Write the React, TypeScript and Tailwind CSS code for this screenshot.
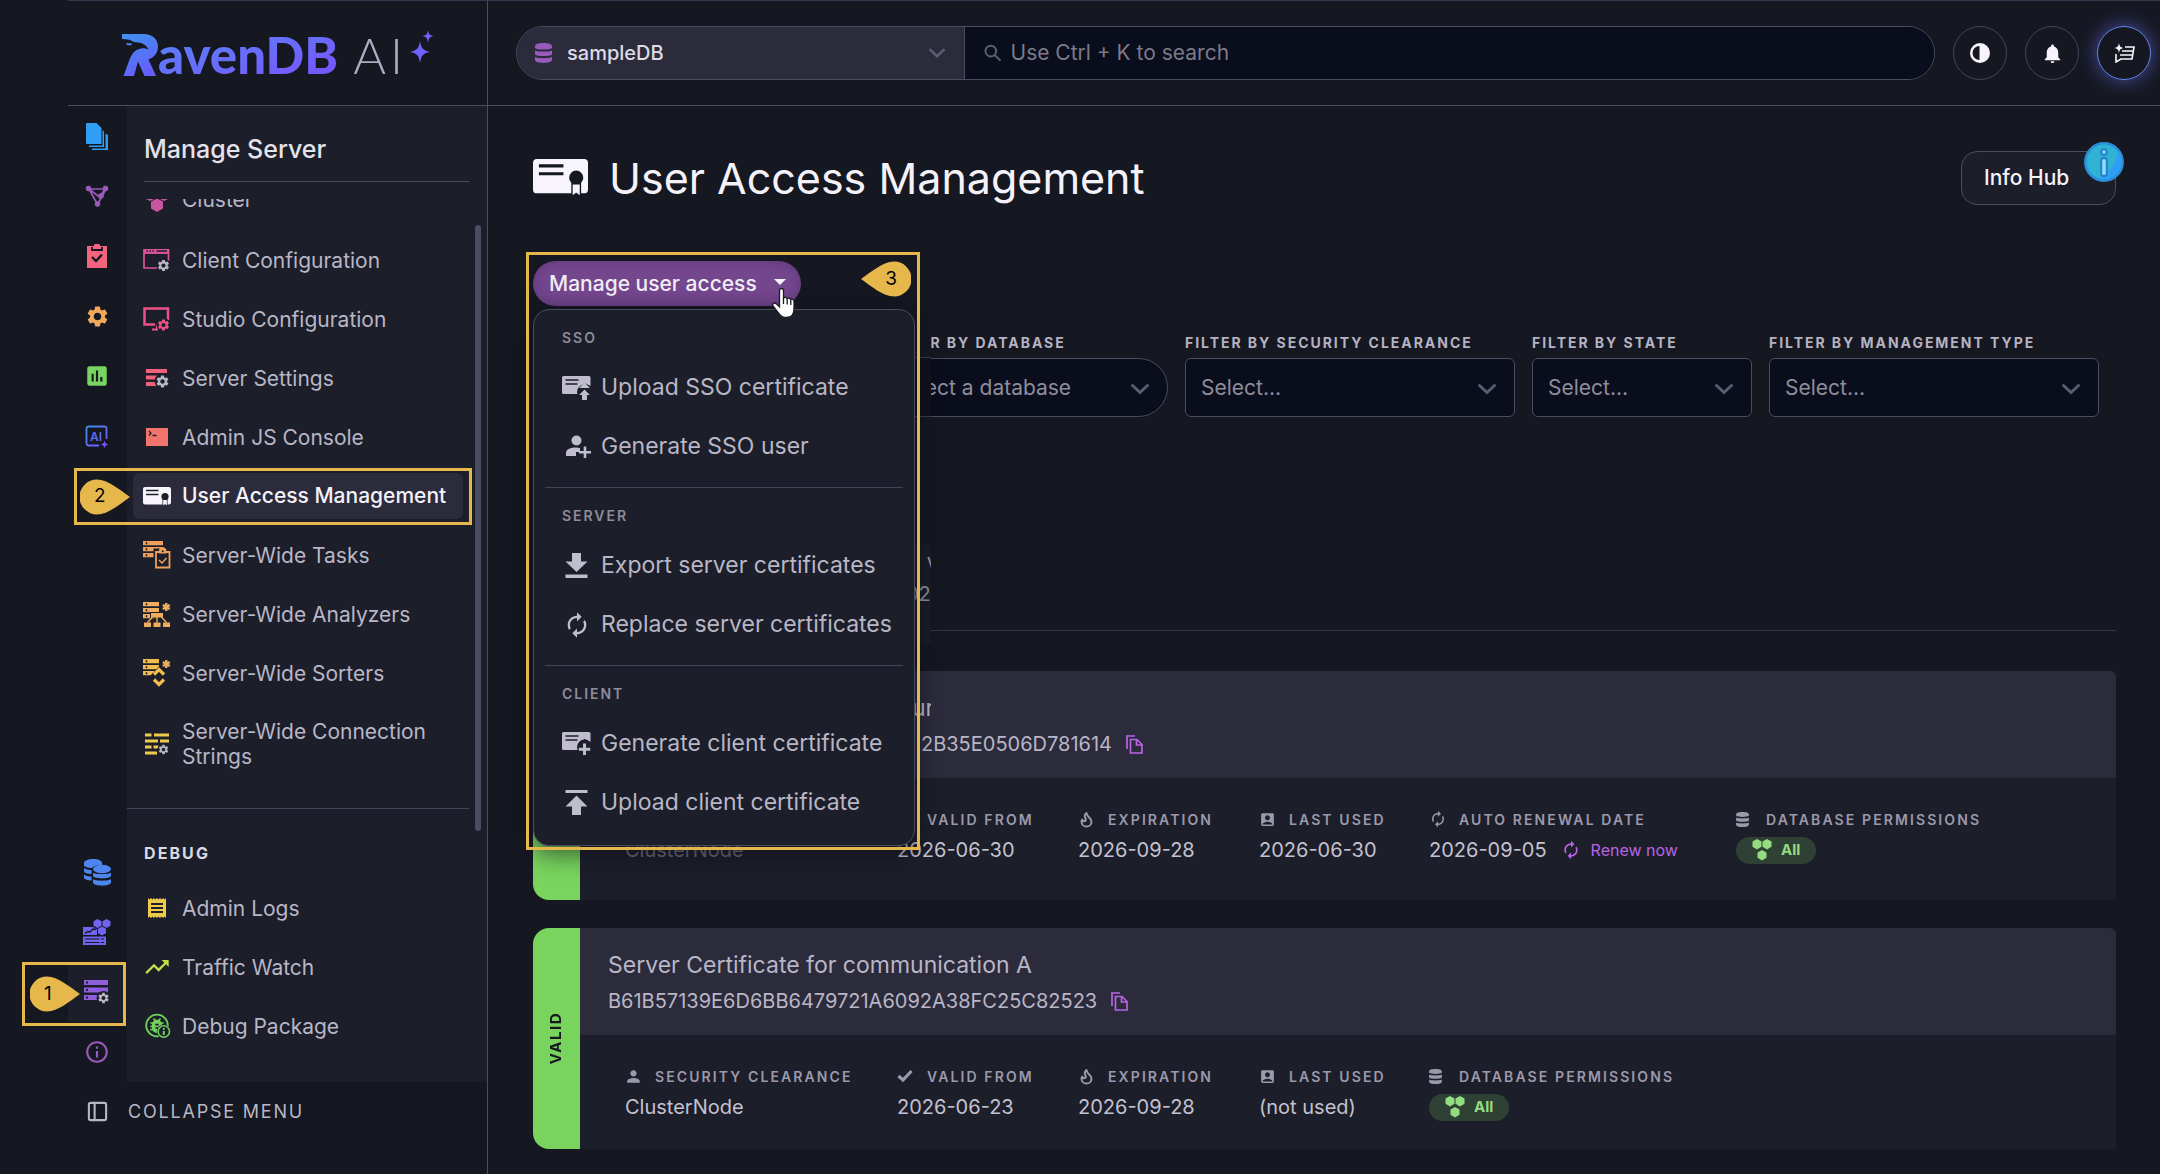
import type { ReactNode } from "react";
import { Flame, PanelLeft } from "lucide-react";
import {
  MdAccountBox,
  MdAutorenew,
  MdBugReport,
  MdInfoOutline,
  MdNotifications,
  MdPerson,
  MdPoll,
  MdReceipt,
  MdSettings,
  MdTrendingUp,
} from "react-icons/md";

const PANEL = "#1c1e2a";
const PAGE = "#151721";

/* ---------- icons ---------- */

const DocsIcon = () => (
  <svg width="22" height="27" viewBox="0 0 22 27" fill="#2f9ef4">
    <path d="M0 1a1 1 0 0 1 1-1h9.500l5 5v15a1 1 0 0 1-1 1H1a1 1 0 0 1-1-1z" />
    <path d="M16.500 7l1.500 1.500V24H3v-1.500h13.500zM19.500 10.500L22 12v15H6v-1.500h13.500z" />
  </svg>
);

const GraphIcon = () => (
  <svg width="24" height="24" viewBox="0 0 24 24" fill="#9a5abc" stroke="#9a5abc">
    <path d="M4 5h17l-8.500 15.500zM4 5l10.500 8L20 5" fill="none" strokeWidth="1.700" />
    <circle cx="3.500" cy="4.500" r="2.400" />
    <circle cx="20.500" cy="4.500" r="2.400" />
    <circle cx="12.500" cy="20" r="2.400" />
    <circle cx="16" cy="12" r="2.400" />
  </svg>
);

const ClipboardIcon = () => (
  <svg width="20" height="24" viewBox="0 0 20 24">
    <path d="M0 2h7a3 3 0 0 1 6 0h7v22H0z" fill="#f4647f" />
    <path d="M5 3v3h10V3" fill="none" stroke={PAGE} strokeWidth="1.800" />
    <path d="M5 13l4 4 6-6.500" fill="none" stroke={PAGE} strokeWidth="2.400" />
  </svg>
);

const AiIcon = () => (
  <svg width="24" height="24" viewBox="0 0 24 24">
    <defs>
      <linearGradient id="aiBox" x1="0" y1="0" x2="1" y2="1">
        <stop offset="0" stopColor="#3f8ff2" />
        <stop offset="1" stopColor="#7a52ff" />
      </linearGradient>
    </defs>
    <path d="M14 21.500H3.500a2 2 0 0 1-2-2v-15a2 2 0 0 1 2-2h16a2 2 0 0 1 2 2V15" fill="none" stroke="url(#aiBox)" strokeWidth="1.800" />
    <text x="5" y="16.500" fontSize="12" fontWeight="600" fontFamily="Inter, sans-serif" fill="#5b6cf5">AI</text>
    <path d="M19.500 16.500c.6 2.700 1.300 3.400 4 4-2.700.6-3.400 1.300-4 4-.6-2.700-1.300-3.400-4-4 2.700-.6 3.400-1.300 4-4z" fill="#7a52ff" />
  </svg>
);

const DatabasesIcon = () => (
  <svg width="27" height="27" viewBox="0 0 27 27" fill="#4c86ee">
    <path d="M0 4c0-2.200 4-4 9-4s9 1.500 9 4v2c-5-.5-9 1-10 3-4 0-8-1-8-3z" />
    <path d="M0 9c1.500 1.500 5 2 7.500 2v4C4 15 0 14 0 12.500zM0 15.500C1.500 17 5 17.500 7.500 17.500v4C4 21.500 0 20.500 0 18.500z" />
    <ellipse cx="18" cy="10" rx="9" ry="4.300" />
    <path d="M9 13.500c2 2.200 16 2.200 18 0V17c-1 3.200-17 3.200-18 0zM9 20c2 2.200 16 2.200 18 0v3.500c-1 4.200-17 4.200-18 0z" />
  </svg>
);

const ClusterBoardIcon = () => (
  <svg width="28" height="26" viewBox="0 0 28 26" fill="#7164f0">
    <path d="M14.500 0l4 2.200v4.600l-4 2.200-4-2.200V2.200zM23.500 0l4 2.200v4.600l-4 2.200-4-2.200V2.200zM19 7.500l4 2.200v4.600l-4 2.200-4-2.200V9.700z" />
    <path d="M0 8h10l4 2v6H0z" />
    <path d="M2 14.500l3-2 2 .5 3-3 2 .500 1-1" fill="none" stroke={PAGE} strokeWidth="1.300" />
    <path d="M0 17.500h23V26H0z" />
    <path d="M2 20h14.500M18 20h3M2 23.500h14.500M18 23.500h3" stroke={PAGE} strokeWidth="1.200" />
  </svg>
);

const ServerGearIcon = () => (
  <svg width="26" height="24" viewBox="0 0 26 24" fill="#8d5fdc">
    <path d="M0 0h24v5H0zM0 7.500h24v5H0zM0 15h13v5H0z" />
    <path d="M2 1.500h2v2H2zM2 9h2v2H2zM2 16.500h2v2H2z" fill={PANEL} />
    <circle cx="19.500" cy="18" r="7" fill={PANEL} />
    <MdSettings x="13" y="11.500" size={13} />
  </svg>
);

const ClientConfigIcon = () => (
  <svg width="28" height="25" viewBox="0 0 28 25" fill="#d9539a">
    <path d="M1 1h24.500v4H1z" />
    <path d="M1 1v19h16M25.500 1v12" fill="none" stroke="#d9539a" strokeWidth="1.700" />
    <path d="M1 5.200h24.500" stroke="#d9539a" strokeWidth="1.500" />
    <path d="M3.500 3h1.500M6.500 3H8M9.500 3H11M13.500 3H24" stroke={PANEL} strokeWidth="1.400" />
    <circle cx="20.500" cy="17.500" r="7" fill={PANEL} />
    <MdSettings x="13.500" y="10.500" size={14} />
  </svg>
);

const StudioConfigIcon = () => (
  <svg width="28" height="25" viewBox="0 0 28 25" fill="#e9517f">
    <path d="M12 17.500H1.500V1.500h23.500V13" fill="none" stroke="#ec5288" strokeWidth="2.500" />
    <path d="M9 22.500h5v-5" fill="none" stroke="#ec5288" strokeWidth="2.200" />
    <circle cx="20.500" cy="18" r="7" fill={PANEL} />
    <MdSettings x="13.500" y="11" size={14} color="#ec5288" />
  </svg>
);

const ServerSettingsIcon = () => (
  <svg width="28" height="22" viewBox="0 0 28 22" fill="#f3607a">
    <path d="M3 2h21v4H3zM3 8.500h12v4H3zM3 15h11v4H3z" />
    <circle cx="19" cy="14" r="7.500" fill={PANEL} />
    <MdSettings x="12" y="7" size={15} />
  </svg>
);

const ConsoleIcon = () => (
  <svg width="28" height="20" viewBox="0 0 28 20">
    <path d="M3 1h22v18H3z" fill="#f3746c" />
    <path d="M6 4l2 2.200L6 8.500M9.500 8.500h4" fill="none" stroke={PANEL} strokeWidth="1.300" />
  </svg>
);

const CertIcon = ({ size, hole }: { size: number; hole: string }) => (
  <svg width={size} height={(size * 19) / 28} viewBox="0 0 28 19">
    <rect width="28" height="17.500" rx="2" fill="#f7f5fb" />
    <path d="M3 3.500h12.500M3 7.500h12.500" stroke={hole} strokeWidth="1.600" />
    <circle cx="22" cy="9.500" r="3.600" fill={hole} />
    <path d="M19.500 12h5v7l-2.500-1.500-2.500 1.500z" fill={hole} />
    <path d="M20.200 13h3.600v5.500L22 17l-1.800 1.500z" fill="#f7f5fb" />
  </svg>
);

const Rack = ({ w }: { w: number }) => (
  <>
    <path d={`M0 0h${w}v4.200H0zM0 6h${w}v4.200H0zM0 12h${w - 4}v4.200H0z`} />
    <path d="M3.500 1.200v2M3.500 7.200v2M3.500 13.200v2" stroke={PANEL} strokeWidth="1.500" />
  </>
);

const Asterisk = () => (
  <path d="M23.300 1v8M19.800 3l7 4M26.800 3l-7 4" stroke="#f0ae5c" strokeWidth="2.400" />
);

const WideTasksIcon = () => (
  <svg width="28" height="28" viewBox="0 0 28 28" fill="#eea05a">
    <Rack w={20} />
    <path d="M10.500 7.500h20v22h-20z" fill={PANEL} />
    <path d="M13 11h13.500v15.500H13z" fill="none" stroke="#eea05a" strokeWidth="1.800" />
    <path d="M16 12.500V10a3.700 3.700 0 0 1 7.400 0v2.500z" />
    <circle cx="19.700" cy="10.300" r="1" fill={PANEL} />
    <path d="M16 19l3 3 4.500-5" fill="none" stroke="#eea05a" strokeWidth="1.500" />
  </svg>
);

const WideAnalyzersIcon = () => (
  <svg width="28" height="25" viewBox="0 0 28 25" fill="#f0ae5c">
    <Rack w={16} />
    <path d="M7 10h14v6H7z" fill={PANEL} />
    <path d="M8 11h12v4.500H8zM1 20.500h7V25H1zM10.500 20.500h7V25h-7zM20 20.500h7V25h-7z" />
    <path d="M9.500 15l-5 5.500M14 15v5.500M18.500 15l5 5.500" stroke="#f0ae5c" strokeWidth="1.400" />
    <Asterisk />
  </svg>
);

const WideSortersIcon = () => (
  <svg width="28" height="28" viewBox="0 0 28 28" fill="#f3bd4e">
    <Rack w={16} />
    <path d="M7 17l9-9.500 9 9.500-9 11z" fill={PANEL} />
    <path d="M11 15.500l5-5 5 5M11 20.500l5 5 5-5" fill="none" stroke="#f3bd4e" strokeWidth="3.200" />
    <Asterisk />
  </svg>
);

const ConnectionStringsIcon = () => (
  <svg width="28" height="24" viewBox="0 0 28 24" fill="#eecb4b">
    <path d="M2 1.500h6.500v3H2zM11 1.500h15v3H11zM2 7.500h13v3H2zM17 7.500h9v3h-9zM2 13.500h6.500v3H2zM10.500 13.500h5v3h-5zM2 19.500h12v3H2z" />
    <circle cx="20.500" cy="17.500" r="6" fill={PANEL} />
    <MdSettings x="14.500" y="11.500" size={12} />
  </svg>
);

const DebugPackageIcon = () => (
  <svg width="28" height="26" viewBox="0 0 28 26">
    <circle cx="14" cy="12.500" r="10.800" fill="none" stroke="#6fd25a" strokeWidth="1.800" />
    <MdBugReport x="4" y="2.500" size={20} color="#6fd25a" />
    <circle cx="20.800" cy="18.500" r="7" fill={PANEL} />
    <circle cx="20.800" cy="18.500" r="5.700" fill="none" stroke="#6fd25a" strokeWidth="1.600" />
    <path d="M20.800 15v1.700M20.800 18v4" stroke="#6fd25a" strokeWidth="2" />
  </svg>
);

const DbStackIcon = ({ w, h, color }: { w: number; h: number; color: string }) => (
  <svg width={w} height={h} viewBox="0 0 17 20" fill={color} className="shrink-0">
    <path d="M0 3.200C0 1 3.500 0 8.500 0S17 1 17 3.200V5c-2 2-15 2-17 0zM0 7.400c3 1.600 14 1.600 17 0v4.200c-2 2-15 2-17 0zM0 14c3 1.600 14 1.600 17 0v2.600C17 19 13.500 20 8.500 20S0 19 0 16.600z" />
  </svg>
);

const Chevron = ({ size = 20 }: { size?: number }) => (
  <svg width={size} height="12" viewBox="0 0 20 12" fill="none" stroke="#5a5c72" strokeWidth="3" strokeLinecap="round" className="pointer-events-none">
    <path d="M2.500 2.500l7.500 7 7.500-7" />
  </svg>
);

const CertBase = ({ children }: { children: ReactNode }) => (
  <svg width="29" height="25" viewBox="0 0 29 25" fill="#c0bdcd">
    <path d="M1.500 1h25.500a1.500 1.500 0 0 1 1.500 1.500V11l-6-3-6.500 6v5H1.500A1.500 1.500 0 0 1 0 17.500v-15A1.500 1.500 0 0 1 1.500 1z" />
    <path d="M3.500 5h13M3.500 9h12" stroke={PANEL} strokeWidth="1.500" />
    {children}
  </svg>
);

const CertUploadIcon = () => (
  <CertBase>
    <circle cx="22.500" cy="17" r="7.500" fill={PANEL} />
    <path d="M17 13l5.500-5.500 5.500 5.500zM17 20l5.500-5.500 5.500 5.500h-3v5h-5v-5z" />
  </CertBase>
);

const CertPlusIcon = () => (
  <CertBase>
    <circle cx="22.500" cy="16" r="7.500" fill={PANEL} />
    <path d="M22.500 12.500v11.500M16.800 18.200h11.400" stroke="#c0bdcd" strokeWidth="3" />
  </CertBase>
);

const UserPlusIcon = () => (
  <svg width="29" height="23" viewBox="0 0 29 23" fill="#c0bdcd">
    <circle cx="14.500" cy="5.500" r="5" />
    <path d="M4 21v-3c0-4 5-5.500 10-5.500 1.500 0 3 .2 4 .5v4h-4v4z" />
    <path d="M23 11.500v11.500M17 17.200h12" stroke="#c0bdcd" strokeWidth="2.600" />
  </svg>
);

const DownloadIcon = () => (
  <svg width="29" height="25" viewBox="0 0 29 25" fill="#c0bdcd">
    <path d="M10 0h9v8.500h6.500L14.500 19 3.500 8.500H10zM3.500 21.500h22V25h-22z" />
  </svg>
);

const UploadIcon = () => (
  <svg width="29" height="25" viewBox="0 0 29 25" fill="#c0bdcd">
    <path d="M10 25h9v-8.500h6.500L14.500 5.500 3.500 16.500H10zM3.500 0h22v3h-22z" />
  </svg>
);

const ReplaceIcon = () => (
  <span className="flex w-[29px] justify-center">
    <MdAutorenew size={28} color="#c0bdcd" />
  </span>
);

const CopyIcon = () => (
  <svg width="17" height="19" viewBox="0 0 17 19" fill="none" stroke="#b964e4" strokeWidth="1.700">
    <path d="M1 14V1h8" />
    <path d="M4.500 4.500h6.500l5 5V18H4.500zM10.500 4.500V10H16" />
  </svg>
);

const CheckIcon = () => (
  <svg width="16" height="14" viewBox="0 0 16 14" fill="none" stroke="#9c99ab" strokeWidth="3.200">
    <path d="M1.500 7l4.500 4L14.500 2" />
  </svg>
);

const HexesIcon = () => (
  <svg width="20" height="22" viewBox="0 0 20 22" fill="#93dc80">
    <path d="M5 0l4.500 2.600v5.200L5 10.400.5 7.800V2.600zM15 0l4.500 2.600v5.200L15 10.400l-4.500-2.600V2.600zM10 11l4.500 2.600v5.200L10 21.400l-4.500-2.600v-5.200z" />
  </svg>
);

const Logo = () => (
  <div className="flex items-end" role="img" aria-label="RavenDB AI">
    <svg width="36" height="42" viewBox="0 0 36 42">
      <defs>
        <linearGradient id="raven" x1="0" y1="0" x2="0.400" y2="1">
          <stop offset="0" stopColor="#3f93f0" />
          <stop offset="1" stopColor="#6560fb" />
        </linearGradient>
      </defs>
      <path
        d="M0 0h22c8 0 14 5 14 12.500 0 6-3.500 11-9.500 13L34 42H22.500l-6.500-14.500L12 42H1.500L7 27c2.500-6 4.500-11 12-12.500 3-.5 6 .5 7.500 1C24 10.500 20 9 16 8.500 10 8.500 10 5 0 5z"
        fill="url(#raven)"
      />
      <path d="M4 9l6 .500-1 2-4-.500z" fill="#4a82f2" />
    </svg>
    <span className="-mb-[7px] bg-linear-to-br from-[#4d86f5] to-[#7a4dff] bg-clip-text font-[Lato] text-[51px] leading-[56px] font-black text-transparent">
      avenDB
    </span>
    <span className="-mb-[7px] ml-[15px] flex gap-[4px] font-[Lato] text-[50px] leading-[56px] font-light text-[#b0abc2]">
      <span>A</span>
      <span>I</span>
    </span>
    <svg width="24" height="34" viewBox="0 0 24 34" className="mb-3 ml-[7px]" fill="#7060fb">
      <path d="M10 11c1.300 7.500 2.500 9 10 11-7.500 1.500-8.700 3.500-10 11-1.300-7.500-2.500-9.500-10-11 7.500-2 8.700-3.500 10-11zM18 0c.8 4.500 1.500 5.200 6 6-4.500.8-5.200 2-6 7-.8-5-1.500-6.200-6-7 4.500-.8 5.200-1.500 6-6z" />
    </svg>
  </div>
);

/* ---------- callouts ---------- */

const Callout = ({ n, flip }: { n: number; flip?: boolean }) => (
  <span className="relative flex h-[36px] w-[50px] items-center">
    <svg width="50" height="36" viewBox="0 0 50 36" className={flip ? "absolute rotate-180" : "absolute"}>
      <path d="M50 18C40 11 28 .5 17 .5a17.500 17.500 0 0 0 0 35C28 35.500 40 25 50 18z" fill="#e6b84c" />
    </svg>
    <span className={flip ? "relative w-full pr-[14px] text-right text-[19px] text-black" : "relative w-full pl-[14px] text-[19px] text-black"}>{n}</span>
  </span>
);

/* ---------- sidebar ---------- */

const navItems: { icon: ReactNode; label: string; active?: boolean }[] = [
  { icon: <ClientConfigIcon />, label: "Client Configuration" },
  { icon: <StudioConfigIcon />, label: "Studio Configuration" },
  { icon: <ServerSettingsIcon />, label: "Server Settings" },
  { icon: <ConsoleIcon />, label: "Admin JS Console" },
  { icon: <CertIcon size={28} hole={PANEL} />, label: "User Access Management", active: true },
  { icon: <WideTasksIcon />, label: "Server-Wide Tasks" },
  { icon: <WideAnalyzersIcon />, label: "Server-Wide Analyzers" },
  { icon: <WideSortersIcon />, label: "Server-Wide Sorters" },
];

const debugItems = [
  { icon: <MdReceipt size={24} color="#eecb4b" />, label: "Admin Logs" },
  { icon: <MdTrendingUp size={28} color="#c3dc4a" />, label: "Traffic Watch" },
  { icon: <DebugPackageIcon />, label: "Debug Package" },
];

const NavItem = ({ icon, label, active }: { icon: ReactNode; label: string; active?: boolean }) => (
  <a
    href="#"
    className={
      active
        ? "relative mx-[6px] flex h-[46px] items-center gap-[11px] rounded-md bg-[#2b2b3c] pl-[10px] text-[21px] font-medium text-[#f4f2f8]"
        : "mx-[6px] flex min-h-[46px] items-center gap-[11px] py-[10px] pl-[10px] text-[21px] leading-[25px] text-[#b9b6c6]"
    }
  >
    <span className="flex h-[26px] w-7 shrink-0 items-center justify-center">{icon}</span>
    {label}
    {active && (
      <span className="absolute -top-[5px] -left-[59px] flex h-[57px] w-[398px] items-center border-3 border-[#e6b84c] pl-[3px] font-normal">
        <Callout n={2} />
      </span>
    )}
  </a>
);

const RailButton = ({ label, children }: { label: string; children: ReactNode }) => (
  <button type="button" aria-label={label} className="flex h-[60px] w-full items-center justify-center">
    {children}
  </button>
);

const Sidebar = () => (
  <aside className="flex w-[420px] shrink-0 flex-col border-t border-r border-t-[#2f3b4d] border-r-[#4a4c5f]">
    <div className="flex h-[105px] items-end border-b border-[#4a4c5f] pb-[29px] pl-[54px]">
      <Logo />
    </div>
    <div className="flex flex-1">
      <nav aria-label="Sections" className="flex w-[58px] shrink-0 flex-col justify-between">
        <div>
          <RailButton label="Documents"><DocsIcon /></RailButton>
          <RailButton label="Indexes"><GraphIcon /></RailButton>
          <RailButton label="Tasks"><ClipboardIcon /></RailButton>
          <RailButton label="Settings"><MdSettings size={25} color="#f0a85a" /></RailButton>
          <RailButton label="Stats"><MdPoll size={26} color="#78d55f" /></RailButton>
          <RailButton label="AI Hub"><AiIcon /></RailButton>
        </div>
        <div>
          <RailButton label="Databases"><DatabasesIcon /></RailButton>
          <RailButton label="Cluster Dashboard"><ClusterBoardIcon /></RailButton>
          <div className="relative bg-[#1c1e2a]">
            <RailButton label="Manage Server"><ServerGearIcon /></RailButton>
            <span className="absolute top-0 -left-[46px] flex h-[64px] w-[104px] items-center border-3 border-[#e6b84c] pl-[5px]">
              <Callout n={1} />
            </span>
          </div>
          <RailButton label="About"><MdInfoOutline size={26} color="#9a5abc" /></RailButton>
        </div>
      </nav>
      <div className="ml-px flex flex-1 bg-[#1c1e2a]">
        <div className="flex flex-1 flex-col">
          <h2 className="ml-[17px] h-[76px] border-b border-[#4a4c5f] pt-[25px] text-[25px] leading-9 font-medium text-[#e4e2ea]">
            Manage Server
          </h2>
          <div className="mt-[17px] h-[24px] overflow-hidden">
            <div className="-mt-[22px]">
              <a href="#" className="ml-[6px] flex h-[46px] items-center gap-[11px] pl-[10px] text-[21px] text-[#b9b6c6]">
                <svg width="28" height="28" viewBox="0 0 28 28" fill="#c7559f">
                  <path d="M7 2l6 3v7l-6 3-6-3V5zM21 2l6 3v7l-6 3-6-3V5zM14 12.500l6 3v7L14 26l-6-3.500v-7z" />
                </svg>
                Cluster
              </a>
            </div>
          </div>
          <div className="mt-[14px] flex flex-col gap-[13px]">
            {navItems.map((item) => (
              <NavItem key={item.label} icon={item.icon} label={item.label} active={item.active} />
            ))}
            <NavItem icon={<ConnectionStringsIcon />} label="Server-Wide Connection Strings" />
          </div>
          <div className="mt-[29px] border-t border-[#43455a]" />
          <h3 className="mt-[32px] mb-[20px] ml-[17px] text-[16px] leading-6 font-bold tracking-[0.13em] text-[#dad8e2]">DEBUG</h3>
          <div className="flex flex-col gap-[13px]">
            {debugItems.map((item) => (
              <NavItem key={item.label} icon={item.icon} label={item.label} />
            ))}
          </div>
        </div>
        <div className="w-[18px] shrink-0 pt-[119px] pl-[6px]">
          <div className="h-[606px] w-[6px] rounded-full bg-[#4a4c61]" />
        </div>
      </div>
    </div>
    <button type="button" className="mb-[34px] flex h-[58px] items-center gap-[19px] pl-[18px] text-[18px] tracking-widest text-[#b9b6c6]">
      <PanelLeft size={23} strokeWidth={2.200} />
      COLLAPSE MENU
    </button>
  </aside>
);

/* ---------- header ---------- */

const RoundButton = ({ label, glow, children }: { label: string; glow?: boolean; children: ReactNode }) => (
  <button
    type="button"
    aria-label={label}
    className={
      glow
        ? "flex size-[54px] shrink-0 items-center justify-center rounded-full border border-[#5f8af0] shadow-[0_0_18px_2px_#42468c]"
        : "flex size-[54px] shrink-0 items-center justify-center rounded-full border border-[#43455a]"
    }
  >
    {children}
  </button>
);

const Header = () => (
  <header className="flex h-[106px] items-center gap-[18px] border-t border-b border-t-[#2f3b4d] border-b-[#4a4c5f] pr-[9px] pl-[28px]">
    <div className="flex h-[54px] flex-1 overflow-hidden rounded-full border border-[#4a4c5f]">
      <button type="button" className="flex w-[448px] items-center gap-[15px] border-r border-[#4a4c5f] bg-[#2b2b3c] px-[18px] text-[20px] font-medium text-[#dddbe5]">
        <DbStackIcon w={17} h={20} color="#9a5abc" />
        <span className="flex-1 text-left">sampleDB</span>
        <Chevron size={18} />
      </button>
      <label className="flex flex-1 items-center gap-[9px] bg-[#0a0d1c] pl-[19px]">
        <svg width="18" height="18" viewBox="0 0 18 18" fill="none" stroke="#5c5d70" strokeWidth="2">
          <circle cx="7" cy="7" r="5.500" />
          <path d="M11 11l6 6" />
        </svg>
        <input
          type="search"
          aria-label="Search"
          placeholder="Use Ctrl + K to search"
          className="w-full bg-transparent text-[21px] outline-none placeholder:text-[#7b7a8a]"
        />
      </label>
    </div>
    <RoundButton label="Theme">
      <svg width="20" height="20" viewBox="0 0 20 20">
        <circle cx="10" cy="10" r="10" fill="#f7f5fb" />
        <path d="M9.500 3a7 7 0 0 0 0 14z" fill={PAGE} />
      </svg>
    </RoundButton>
    <RoundButton label="Notifications"><MdNotifications size={23} color="#f7f5fb" /></RoundButton>
    <RoundButton label="AI Assistant" glow>
      <svg width="21" height="20" viewBox="0 0 21 20" fill="none" stroke="#f7f5fb" strokeWidth="1.600">
        <path d="M11 4h9l-2 12H7l-5 3v-8M8 8h11M6 12h12" />
        <path d="M5 0c.6 3.400 1.300 4.200 4.500 5C6.300 5.800 5.600 6.600 5 10 4.400 6.600 3.700 5.800.5 5 3.700 4.200 4.400 3.400 5 0z" fill="#f7f5fb" stroke="none" />
      </svg>
    </RoundButton>
  </header>
);

/* ---------- access menu ---------- */

const menuGroups = [
  {
    title: "SSO",
    items: [
      { icon: <CertUploadIcon />, label: "Upload SSO certificate" },
      { icon: <UserPlusIcon />, label: "Generate SSO user" },
    ],
  },
  {
    title: "SERVER",
    items: [
      { icon: <DownloadIcon />, label: "Export server certificates" },
      { icon: <ReplaceIcon />, label: "Replace server certificates" },
    ],
  },
  {
    title: "CLIENT",
    items: [
      { icon: <CertPlusIcon />, label: "Generate client certificate" },
      { icon: <UploadIcon />, label: "Upload client certificate" },
    ],
  },
];

const AccessMenu = () => (
  <div className="absolute top-[48px] left-0 z-20 w-[382px] rounded-2xl border border-[#4a4c5f] bg-[#1c1e2a] px-[11px] pb-[2px] shadow-[0_8px_24px_rgba(10,12,20,0.6)]">
    {menuGroups.map((group) => (
      <div key={group.title} className="border-b border-[#43455a] pt-[16px] pb-[11px] last:border-b-0">
        <div className="mb-[8px] pl-[17px] text-[14px] leading-6 font-semibold tracking-[0.14em] text-[#8f8c9e]">{group.title}</div>
        {group.items.map((item) => (
          <button key={item.label} type="button" className="flex h-[59px] w-full items-center gap-[10px] pl-[17px] text-[23px] whitespace-nowrap text-[#b9b6c6]">
            <span className="shrink-0">{item.icon}</span>
            {item.label}
          </button>
        ))}
      </div>
    ))}
  </div>
);

const Cursor = () => (
  <svg width="26" height="32" viewBox="0 0 26 32" className="absolute top-[26px] left-[238px] z-40">
    <path
      d="M8.500 3.500a2 2 0 0 1 4 0V11c1-1 3-.8 3.600.6 1-.8 3-.5 3.500.9 1.200-.7 3.400-.2 3.400 2V22c0 5-2.500 8.500-7.500 8.500-4 0-6-1.500-7.500-4L2 19c-1.200-2.200 1.500-4 3.300-2.200l3.200 3z"
      fill="#fff"
      stroke="#1b1b22"
      strokeWidth="1.300"
    />
    <path d="M12.500 11v6M16.200 12v5.500M19.800 13v5" stroke="#1b1b22" strokeWidth="1.300" />
  </svg>
);

/* ---------- filters ---------- */

const Filter = ({ id, label, text, width, pill }: { id: string; label: string; text: string; width: string; pill?: boolean }) => (
  <div className={`relative ${width}`}>
    <label htmlFor={id} className="mb-[5px] block text-[14px] leading-5 font-bold tracking-[0.14em] whitespace-nowrap text-[#b5b2c2] uppercase">
      {label}
    </label>
    <div className="relative">
      <select
        id={id}
        className={
          pill
            ? "h-[59px] w-full appearance-none rounded-full border border-[#4a4c5f] bg-[#0a0d1c] px-[9px] text-[21px] text-[#8f8d9c]"
            : "h-[59px] w-full appearance-none rounded-md border border-[#4a4c5f] bg-[#0a0d1c] px-[15px] text-[21px] text-[#8f8d9c]"
        }
      >
        <option>{text}</option>
      </select>
      <span className="pointer-events-none absolute top-[25px] right-[18px]">
        <Chevron />
      </span>
    </div>
  </div>
);

/* ---------- certificates ---------- */

const Field = ({ icon, label, children }: { icon: ReactNode; label: string; children: ReactNode }) => (
  <div>
    <dt className="flex h-6 items-center text-[14px] font-semibold tracking-[0.15em] whitespace-nowrap text-[#9c99ab]">
      <span className="flex w-[30px] shrink-0">{icon}</span>
      {label}
    </dt>
    <dd className="mt-1 flex h-[30px] items-center text-[20px] whitespace-nowrap text-[#c4c1d0]">{children}</dd>
  </div>
);

const AllPill = () => (
  <span className="flex h-[27px] items-center gap-[9px] rounded-full bg-[#2f4034] px-4 text-[15px] font-bold text-[#93dc80]">
    <HexesIcon />
    All
  </span>
);

const fieldIcons = {
  person: <MdPerson size={19} className="-ml-px" />,
  flame: <Flame size={17} strokeWidth={2.800} />,
  lastUsed: <MdAccountBox size={17} />,
  renew: <MdAutorenew size={18} />,
  db: <DbStackIcon w={13} h={15} color="#9c99ab" />,
};

const StateStrip = () => (
  <div className="flex w-[47px] shrink-0 items-center justify-center rounded-l-2xl bg-[#79d45e]">
    <span className="rotate-180 text-[15px] font-bold tracking-[0.1em] text-[#151721] [writing-mode:vertical-rl]">VALID</span>
  </div>
);

const Certificate = ({ title, hash, children, bodyClass }: { title: ReactNode; hash: ReactNode; children: ReactNode; bodyClass: string }) => (
  <article className="flex">
    <StateStrip />
    <div className="flex-1 overflow-hidden rounded-tr-md bg-[#1c1e2a]">
      <div className="h-[107px] bg-[#2b2b3c] pt-[21px] pl-[28px]">
        <h3 className="text-[23px] leading-8 text-[#b9b6c6]">{title}</h3>
        <div className="mt-[5px] flex h-[30px] items-center gap-[14px] text-[20px] text-[#b9b6c6]">
          {hash}
          <button type="button" aria-label="Copy thumbprint"><CopyIcon /></button>
        </div>
      </div>
      <dl className={bodyClass}>{children}</dl>
    </div>
  </article>
);

/* ---------- page ---------- */

export default function App() {
  return (
    <div className="flex min-h-screen bg-[#151721] pl-[68px] font-[Inter,sans-serif] text-[#b9b6c6]">
      <Sidebar />
      <div className="flex min-w-0 flex-1 flex-col">
        <Header />
        <main className="pt-[45px] pr-[44px] pl-[45px]">
          <div className="flex h-[54px] items-center justify-between">
            <h1 className="flex items-center gap-[21px] text-[43px] text-[#f4f2f8]">
              <CertIcon size={55} hole={PAGE} />
              User Access Management
            </h1>
            <button type="button" className="relative h-full w-[155px] rounded-2xl border border-[#4a4c5f] bg-[#1c1e2a] pl-[22px] text-left text-[21px] font-medium text-[#f4f2f8]">
              Info Hub
              <svg width="40" height="40" viewBox="0 0 40 40" className="absolute -top-[10px] -right-[9px]">
                <circle cx="20" cy="20" r="18.700" fill="#2fb2d4" stroke="#2a8fd8" strokeWidth="2.500" />
                <path d="M34 9a18 18 0 0 1-22 27c12-2 20-12 22-27z" fill="#2f9ef4" />
                <circle cx="20" cy="10" r="2.800" fill="#8fdcff" stroke="#2580c8" strokeWidth="2" />
                <rect x="17.200" y="16" width="5.600" height="18" rx="2.800" fill="#8fdcff" stroke="#2580c8" strokeWidth="2" />
              </svg>
            </button>
          </div>

          <div className="relative mt-[56px] h-[45px]">
            <button
              type="button"
              aria-expanded="true"
              className="flex h-[45px] w-[268px] items-center justify-between rounded-full bg-[#74468e] pr-[15px] pl-4 text-[21px] font-medium text-[#f0edf5] shadow-[inset_0_0_12px_rgba(40,30,60,0.3)]"
            >
              Manage user access
              <svg width="12" height="6" viewBox="0 0 12 6" fill="#f4f2f8" className="mb-1">
                <path d="M0 0h12L6 6z" />
              </svg>
            </button>
            <AccessMenu />
            <Cursor />
            {/* darker edge beside the open menu */}
            <div className="absolute top-[48px] left-[382px] z-10 flex w-[16px] flex-col overflow-hidden bg-[#151721]">
              <div className="mt-[48px] h-[60px] border-y border-[#3a3c4e] bg-[#10121d]" />
              <div className="mt-[127px] h-[99px] overflow-hidden bg-[#1a1c27] text-[20px] text-[#8f8d9c]">
                <div className="ml-3 pt-[9px] text-[14px] leading-5 font-semibold">V</div>
                <div className="-ml-[9px] pt-[4px] leading-[34px]">02</div>
              </div>
            </div>
            <div className="pointer-events-none absolute -top-[9px] -left-[7px] z-30 flex h-[598px] w-[394px] justify-end border-3 border-[#e6b84c] pt-[6px] pr-[6px]">
              <Callout n={3} flip />
            </div>
          </div>

          <div className="mt-[27px] flex justify-end gap-[17px] pr-[17px]">
            <Filter id="f-db" label="Filter by database" text="Select a database" width="w-[284px]" pill />
            <Filter id="f-sec" label="Filter by security clearance" text="Select..." width="w-[330px]" />
            <Filter id="f-state" label="Filter by state" text="Select..." width="w-[220px]" />
            <Filter id="f-type" label="Filter by management type" text="Select..." width="w-[330px]" />
          </div>

          <div className="mt-[213px] border-t border-[#34364a]" />

          <div className="mt-[40px] flex flex-col gap-[28px]">
            <Certificate
              title={<span className="block w-[323px] overflow-hidden pl-[304px]">ur</span>}
              hash={<span className="w-[504px] text-right">2B35E0506D781614</span>}
              bodyClass="grid h-[122px] grid-cols-[272px_181px_181px_170px_307px_auto] pt-[29px] pl-[45px]"
            >
              <Field icon={fieldIcons.person} label="SECURITY CLEARANCE">
                <span className="text-[#6f6d7c]">ClusterNode</span>
              </Field>
              <Field icon={<CheckIcon />} label="VALID FROM">2026-06-30</Field>
              <Field icon={fieldIcons.flame} label="EXPIRATION">2026-09-28</Field>
              <Field icon={fieldIcons.lastUsed} label="LAST USED">2026-06-30</Field>
              <Field icon={fieldIcons.renew} label="AUTO RENEWAL DATE">
                2026-09-05
                <button type="button" className="ml-[14px] flex items-center gap-[10px] text-[16px] text-[#b964e4]">
                  <MdAutorenew size={20} />
                  Renew now
                </button>
              </Field>
              <Field icon={fieldIcons.db} label="DATABASE PERMISSIONS"><AllPill /></Field>
            </Certificate>
            <Certificate
              title="Server Certificate for communication A"
              hash="B61B57139E6D6BB6479721A6092A38FC25C82523"
              bodyClass="grid h-[114px] grid-cols-[272px_181px_181px_170px_auto] pt-[29px] pl-[45px]"
            >
              <Field icon={fieldIcons.person} label="SECURITY CLEARANCE">ClusterNode</Field>
              <Field icon={<CheckIcon />} label="VALID FROM">2026-06-23</Field>
              <Field icon={fieldIcons.flame} label="EXPIRATION">2026-09-28</Field>
              <Field icon={fieldIcons.lastUsed} label="LAST USED">(not used)</Field>
              <Field icon={fieldIcons.db} label="DATABASE PERMISSIONS"><AllPill /></Field>
            </Certificate>
          </div>
        </main>
      </div>
    </div>
  );
}
